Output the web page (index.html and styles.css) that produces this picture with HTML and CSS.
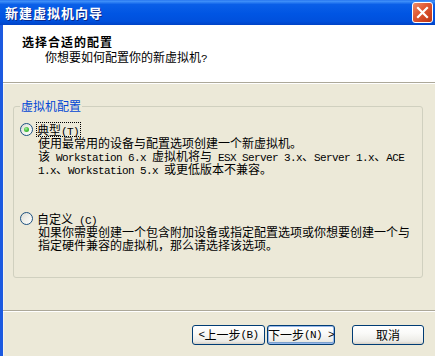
FILE: index.html
```html
<!DOCTYPE html>
<html lang="zh-CN">
<head>
<meta charset="utf-8">
<title>新建虚拟机向导</title>
<link rel="stylesheet" href="styles.css">
</head>
<body>
<div class="window">
  <div class="titlebar">
    <span class="title">新建虚拟机向导</span>
    <span class="close">
      <svg width="13" height="13" viewBox="0 0 13 13"><path d="M2 2 L11 11 M11 2 L2 11" stroke="#fff" stroke-width="2.2" stroke-linecap="square" fill="none"/></svg>
    </span>
  </div>
  <div class="client">
    <div class="header">
      <div class="h-title">选择合适的配置</div>
      <div class="h-sub">你想要如何配置你的新虚拟机<span class="lat">?</span></div>
    </div>
    <div class="body">
      <fieldset class="group">
        <legend>虚拟机配置</legend>
        <div class="option">
          <span class="radio checked"><span class="dot"></span></span>
          <span class="label focus">典型<span class="lat">(T)</span></span>
          <div class="desc">
            <div class="line">使用最常用的设备与配置选项创建一个新虚拟机。</div>
            <div class="line">该<span class="lat"> Workstation 6.x </span>虚拟机将与<span class="lat"> ESX Server 3.x</span>、<span class="lat">Server 1.x</span>、<span class="lat">ACE</span></div>
            <div class="line"><span class="lat">1.x</span>、<span class="lat">Workstation 5.x </span>或更低版本不兼容。</div>
          </div>
        </div>
        <div class="option second">
          <span class="radio"></span>
          <span class="label">自定义<span class="lat"> (C)</span></span>
          <div class="desc">
            <div class="line">如果你需要创建一个包含附加设备或指定配置选项或你想要创建一个与</div>
            <div class="line">指定硬件兼容的虚拟机，那么请选择该选项。</div>
          </div>
        </div>
      </fieldset>
    </div>
    <div class="footer">
      <button class="btn back"><span class="lat">&lt; </span>上一步<span class="lat">(B)</span></button>
      <button class="btn next default">下一步<span class="lat">(N) &gt;</span></button>
      <button class="btn cancel">取消</button>
    </div>
  </div>
</div>
</body>
</html>
```

FILE: styles.css
```css
html, body {
  margin: 0;
  padding: 0;
  background: #ECE9D8;
}

body {
  font-family: "Noto Sans CJK SC", "Liberation Sans", sans-serif;
  font-size: 12px;
  color: #000;
}

.window {
  width: 435px;
  height: 356px;
  overflow: hidden;
  display: flex;
  flex-direction: column;
}

.titlebar {
  height: 25px;
  flex: none;
  display: flex;
  align-items: center;
  justify-content: space-between;
  padding: 0 2px 0 5px;
  box-sizing: border-box;
  background: linear-gradient(#2A78F0 0%, #3C8DF8 6%, #0A5FE8 18%, #0055E3 55%, #0050DC 85%, #0043C6 100%);
}

.title {
  color: #fff;
  font-weight: bold;
  font-size: 13px;
  letter-spacing: 1px;
  line-height: 16px;
  text-shadow: 1px 1px 0 #0B2A8C;
}

.close {
  width: 21px;
  height: 21px;
  box-sizing: border-box;
  border: 1px solid #fff;
  border-radius: 3px;
  display: flex;
  align-items: center;
  justify-content: center;
  background: linear-gradient(135deg, #EE8D6C 0%, #E05A35 40%, #CC4321 75%, #B63717 100%);
}

.close svg {
  display: block;
}

.client {
  flex: 1;
  display: flex;
  flex-direction: column;
  border-left: 3px solid #1C5AE0;
  box-shadow: inset 1px 0 0 #F4F3EE;
}

.header {
  background: #fff;
  height: 58px;
  box-sizing: border-box;
  padding: 10px 0 0 19px;
  border-bottom: 1px solid #ACA899;
  box-shadow: 0 1px 0 #fff;
  flex: none;
}

.h-title {
  font-weight: bold;
  height: 14px;
  line-height: 14px;
  letter-spacing: 1px;
}

.h-sub {
  margin: 1px 0 0 23px;
  height: 14px;
  line-height: 14px;
}

.lat {
  font-family: "Liberation Mono", monospace;
  font-size: 11px;
  letter-spacing: -0.6px;
}

.body {
  padding: 16px 12px 0 10px;
  flex: none;
}

.group {
  margin: 0;
  padding: 10px 8px 26px 6px;
  border: 1px solid #D0D0BF;
  border-radius: 3px;
  min-width: 0;
}

.group legend {
  color: #0046D5;
  padding: 0 1px;
  height: 14px;
  line-height: 14px;
}

.option {
  display: grid;
  grid-template-columns: 13px 1fr;
  column-gap: 3px;
}

.option.second {
  margin-top: 37px;
}

.radio {
  width: 13px;
  height: 13px;
  box-sizing: border-box;
  border: 1px solid #1C5180;
  border-radius: 50%;
  background: linear-gradient(135deg, #DCDCD5 0%, #F0F0EA 50%, #FFFFFF 100%);
  display: flex;
  align-items: center;
  justify-content: center;
}

.dot {
  width: 5px;
  height: 5px;
  border-radius: 50%;
  background: radial-gradient(circle at 40% 35%, #A6EFA0 0%, #4DC444 45%, #21A121 100%);
}

.label {
  justify-self: start;
  box-sizing: border-box;
  height: 15px;
  border: 1px dotted transparent;
  margin-top: -1px;
  padding: 0 1px 0 0;
  line-height: 13px;
  white-space: nowrap;
}

.label.focus {
  border-color: #000;
}

.desc {
  grid-column: 2;
  margin: -1px 0 0 2px;
  white-space: nowrap;
}

.line {
  height: 13px;
  line-height: 13px;
}

.footer {
  margin-top: 32px;
  border-top: 1px solid #ACA899;
  box-shadow: inset 0 1px 0 #fff;
  padding: 14px 11px 0 0;
  display: flex;
  justify-content: flex-end;
  flex: none;
}

.btn {
  height: 20px;
  box-sizing: border-box;
  border: 1px solid #003C74;
  border-radius: 3px;
  background: linear-gradient(#FFFFFF 0%, #FAFAF8 40%, #ECEBE6 85%, #D6D0C5 100%);
  font-family: "Noto Sans CJK SC", "Liberation Sans", sans-serif;
  font-size: 12px;
  color: #000;
  padding: 0;
  line-height: 16px;
  display: flex;
  align-items: center;
  justify-content: center;
  white-space: nowrap;
}

.back {
  width: 73px;
}

.next {
  width: 68px;
  margin-left: 2px;
}

.default {
  box-shadow: inset 0 0 0 1px #98B8EA, inset 0 -1px 0 1px #7DA2CE;
}

.cancel {
  width: 72px;
  margin-left: 17px;
}
```
